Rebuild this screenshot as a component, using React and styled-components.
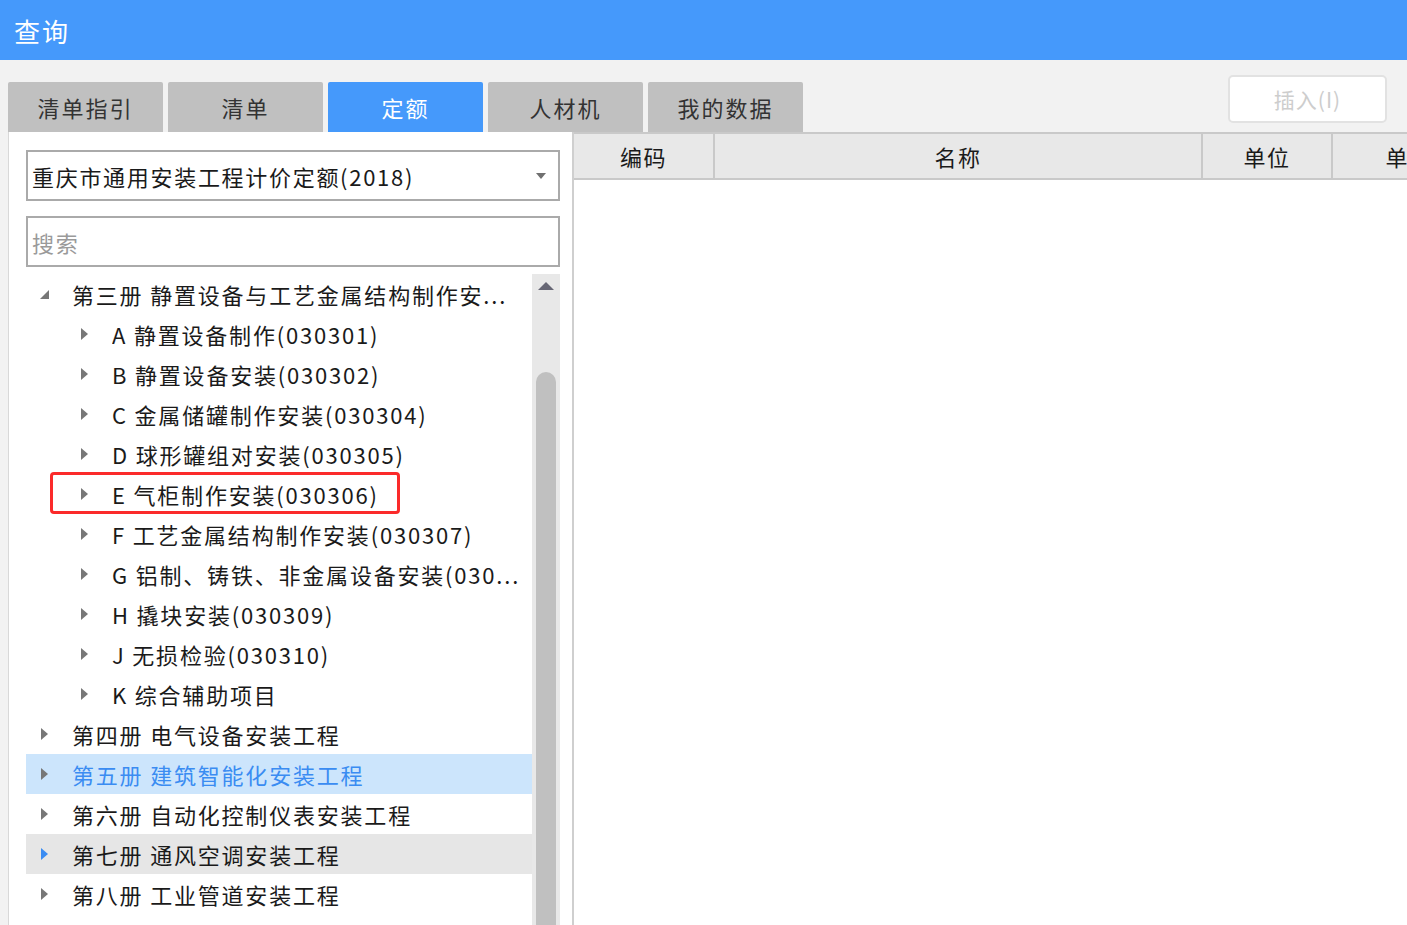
import React from "react";
import styled, { createGlobalStyle } from "styled-components";

const Global = createGlobalStyle`
  html, body { margin: 0; padding: 0; }
  body {
    background: #f2f2f2;
    font-family: "Noto Sans CJK SC", "Noto Sans", sans-serif;
    overflow: hidden;
  }
`;

const Page = styled.div`
  width: 1407px;
  height: 925px;
  display: flex;
  flex-direction: column;
  overflow: hidden;
`;

const TitleBar = styled.div`
  height: 60px;
  flex: none;
  background: #4599fb;
  color: #fff;
  font-size: 26px;
  letter-spacing: 2px;
  line-height: 62px;
  padding-left: 14px;
`;

const TopRow = styled.div`
  height: 72px;
  flex: none;
  display: flex;
  align-items: flex-end;
  padding-left: 8px;
`;

const Tabs = styled.div`
  display: flex;
  gap: 5px;
`;

const Tab = styled.div`
  width: 155px;
  height: 50px;
  background: ${(p) => (p.$active ? "#4599fb" : "#c0c0c0")};
  color: ${(p) => (p.$active ? "#fff" : "#333")};
  font-size: 22px;
  letter-spacing: 2px;
  display: flex;
  align-items: center;
  justify-content: center;
  border-radius: 2px 2px 0 0;
`;

const Spacer = styled.div`
  flex: 1;
`;

const InsertButton = styled.div`
  align-self: flex-start;
  margin-top: 15px;
  margin-right: 20px;
  width: 159px;
  height: 48px;
  box-sizing: border-box;
  border: 2px solid #e2e2e2;
  border-radius: 5px;
  background: #fff;
  color: #cdcdcd;
  font-size: 21px;
  letter-spacing: 1px;
  display: flex;
  align-items: center;
  justify-content: center;
`;

const Content = styled.div`
  flex: 1;
  display: flex;
  margin-left: 8px;
  min-height: 0;
`;

const LeftPanel = styled.div`
  width: 566px;
  flex: none;
  box-sizing: border-box;
  background: #fff;
  border-left: 1px solid #d8d8d8;
  border-right: 2px solid #cfcfcf;
  padding: 18px 12px 0 17px;
  display: flex;
  flex-direction: column;
  min-height: 0;
`;

const Field = styled.div`
  height: 51px;
  box-sizing: border-box;
  border: 2px solid #aaaaaa;
  display: flex;
  align-items: center;
  padding: 0 12px 0 4px;
  font-size: 22px;
  letter-spacing: 1.7px;
  color: ${(p) => (p.$placeholder ? "#9a9a9a" : "#1a1a1a")};
  margin-top: ${(p) => p.$mt || 0}px;
  flex: none;
`;

const FieldText = styled.span`
  flex: 1;
  white-space: nowrap;
`;

const TreeArea = styled.div`
  margin-top: 7px;
  flex: 1;
  display: flex;
  min-height: 0;
`;

const TreeList = styled.div`
  flex: 1;
  display: flex;
  flex-direction: column;
  overflow: hidden;
`;

const Row = styled.div`
  position: relative;
  height: 40px;
  flex: none;
  display: flex;
  align-items: center;
  padding-left: ${(p) => 4 + p.$level * 40}px;
  background: ${(p) =>
    p.$selected ? "#cce5fc" : p.$hover ? "#e6e6e6" : "transparent"};
  color: ${(p) => (p.$selected ? "#3a8cf2" : "#1a1a1a")};
  font-size: 22px;
  white-space: nowrap;
`;

const Caret = styled.span`
  width: 28px;
  height: 40px;
  flex: none;
  display: flex;
  align-items: center;
  justify-content: center;
  margin-right: 14px;
`;

const Label = styled.span`
  overflow: hidden;
  white-space: nowrap;
  letter-spacing: 1.8px;
`;

const Highlight = styled.div`
  position: absolute;
  left: 24px;
  top: -2px;
  width: 350px;
  height: 42px;
  box-sizing: border-box;
  border: 3px solid #fb2a2a;
  border-radius: 4px;
  pointer-events: none;
`;

const Scrollbar = styled.div`
  width: 28px;
  flex: none;
  background: #e8e8e8;
  display: flex;
  flex-direction: column;
  align-items: center;
`;

const ScrollUp = styled.div`
  height: 24px;
  display: flex;
  align-items: center;
  justify-content: center;
  flex: none;
`;

const Thumb = styled.div`
  margin-top: 74px;
  width: 20px;
  flex: 1;
  background: #c0c0c0;
  border-radius: 10px 10px 0 0;
`;

const RightPanel = styled.div`
  flex: 1;
  background: #fff;
  display: flex;
  flex-direction: column;
  min-width: 0;
`;

const Header = styled.div`
  height: 48px;
  box-sizing: border-box;
  border-top: 2px solid #c9c9c9;
  border-bottom: 2px solid #c9c9c9;
  background: #e8e8e8;
  display: flex;
  flex: none;
  overflow: hidden;
`;

const HeaderCell = styled.div`
  width: ${(p) => p.$w}px;
  flex: none;
  box-sizing: border-box;
  border-right: 2px solid #c9c9c9;
  display: flex;
  align-items: center;
  justify-content: center;
  font-size: 22px;
  letter-spacing: 1.5px;
  color: #1a1a1a;
  white-space: nowrap;
`;

const RightArrow = ({ color = "#777" }) => (
  <svg width="9" height="14" viewBox="0 0 9 14">
    <polygon points="1,1 8,7 1,13" fill={color} />
  </svg>
);

const ExpandedArrow = () => (
  <svg width="11" height="11" viewBox="0 0 11 11">
    <polygon points="10,1 10,10 1,10" fill="#777" />
  </svg>
);

const rows = [
  { level: 0, label: "第三册 静置设备与工艺金属结构制作安...", expanded: true },
  { level: 1, label: "A 静置设备制作(030301)" },
  { level: 1, label: "B 静置设备安装(030302)" },
  { level: 1, label: "C 金属储罐制作安装(030304)" },
  { level: 1, label: "D 球形罐组对安装(030305)" },
  { level: 1, label: "E 气柜制作安装(030306)", marked: true },
  { level: 1, label: "F 工艺金属结构制作安装(030307)" },
  { level: 1, label: "G 铝制、铸铁、非金属设备安装(030..." },
  { level: 1, label: "H 撬块安装(030309)" },
  { level: 1, label: "J 无损检验(030310)" },
  { level: 1, label: "K 综合辅助项目" },
  { level: 0, label: "第四册 电气设备安装工程" },
  { level: 0, label: "第五册 建筑智能化安装工程", selected: true },
  { level: 0, label: "第六册 自动化控制仪表安装工程" },
  { level: 0, label: "第七册 通风空调安装工程", hover: true },
  { level: 0, label: "第八册 工业管道安装工程" },
  { level: 0, label: "第九册 消防安装工程" },
];

const tabs = ["清单指引", "清单", "定额", "人材机", "我的数据"];
const cols = [
  { t: "编码", w: 141 },
  { t: "名称", w: 488 },
  { t: "单位", w: 130 },
  { t: "单价", w: 154 },
];

export default function App() {
  return (
    <Page>
      <Global />
      <TitleBar>查询</TitleBar>
      <TopRow>
        <Tabs>
          {tabs.map((t) => (
            <Tab key={t} $active={t === "定额"}>
              {t}
            </Tab>
          ))}
        </Tabs>
        <Spacer />
        <InsertButton>插入(I)</InsertButton>
      </TopRow>
      <Content>
        <LeftPanel>
          <Field>
            <FieldText>重庆市通用安装工程计价定额(2018)</FieldText>
            <svg width="10" height="6" viewBox="0 0 10 6">
              <polygon points="0,0 10,0 5,6" fill="#707070" />
            </svg>
          </Field>
          <Field $mt={15} $placeholder>
            <FieldText>搜索</FieldText>
          </Field>
          <TreeArea>
            <TreeList>
              {rows.map((r, i) => (
                <Row
                  key={i}
                  $level={r.level}
                  $selected={r.selected}
                  $hover={r.hover}
                >
                  <Caret>
                    {r.expanded ? (
                      <ExpandedArrow />
                    ) : (
                      <RightArrow color={r.hover ? "#3a8cf2" : "#777"} />
                    )}
                  </Caret>
                  <Label>{r.label}</Label>
                  {r.marked && <Highlight />}
                </Row>
              ))}
            </TreeList>
            <Scrollbar>
              <ScrollUp>
                <svg width="16" height="8" viewBox="0 0 16 8">
                  <polygon points="8,0 16,8 0,8" fill="#666674" />
                </svg>
              </ScrollUp>
              <Thumb />
            </Scrollbar>
          </TreeArea>
        </LeftPanel>
        <RightPanel>
          <Header>
            {cols.map((c) => (
              <HeaderCell key={c.t} $w={c.w}>
                {c.t}
              </HeaderCell>
            ))}
          </Header>
        </RightPanel>
      </Content>
    </Page>
  );
}
